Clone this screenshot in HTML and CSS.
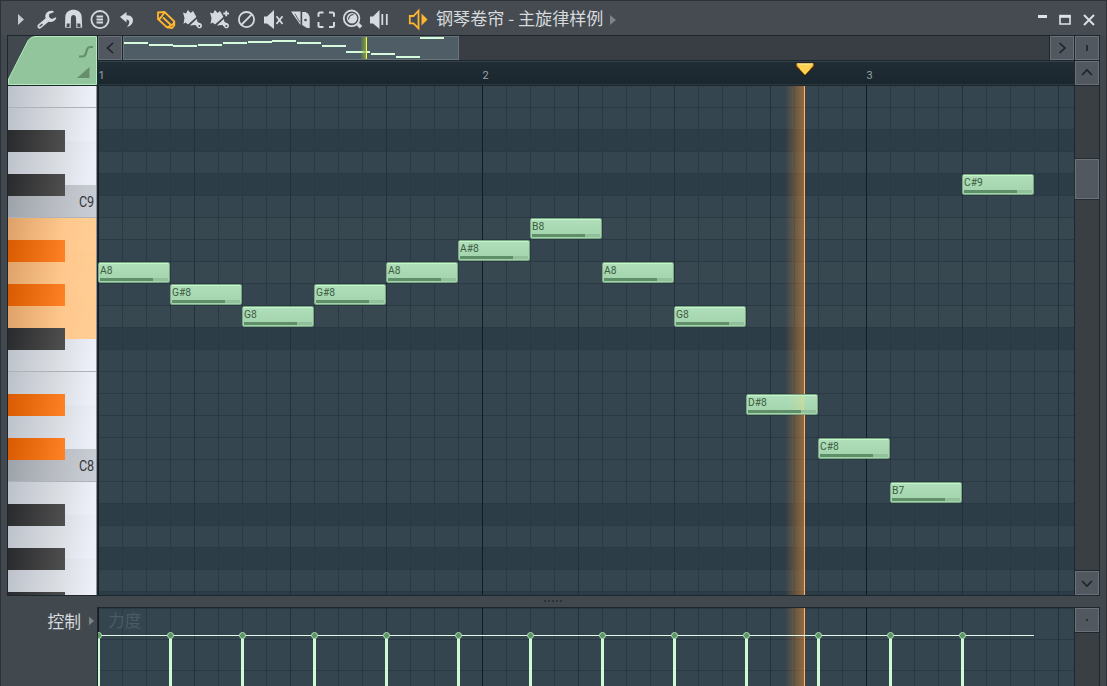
FILE: index.html
```
<!DOCTYPE html>
<html lang="zh-CN">
<head>
    <meta charset="UTF-8">
    <meta name="viewport" content="width=device-width, initial-scale=1.0">
    <title>钢琴卷帘</title>
    <link rel="stylesheet" href="styles.css">
</head>
<body>

<header class="titlebar">
    <svg class="arrow" width="6" height="11" viewBox="0 0 6 11"><path d="M0 0L6 5.5L0 11Z"/></svg>

    <div class="tools">
        <!-- wrench -->
        <svg viewBox="34 6 27 27"><path d="M39.6 26.3L48 19.2" stroke="#d4dae0" stroke-width="4.4" stroke-linecap="round"/><path d="M53.5 11.2C49 9.500 44.600 13 45.400 17.500C46.200 22.800 53.500 23.800 56.300 18.300L56 17.300L51.800 19L49 17.200L49.200 14L53.800 12.300Z"/><path d="M39.500 26.500L42.500 24" stroke="#454b51" stroke-width="1.400"/></svg>
        <!-- magnet -->
        <svg viewBox="61 6 27 27"><path d="M65 27.500L65.300 17C65.600 7.300 81.400 7.300 81.700 17L82.200 27.500L76.400 28L76 18C76 14 71 14 71 18L70.700 28Z"/><path d="M66.800 23.500L66.500 27L69.500 27.300L69.800 23.500ZM77.200 23.500L77.500 27.300L80.600 27L80.300 23.500Z" fill="#454b51"/></svg>
        <svg viewBox="88 6 27 27"><circle cx="100" cy="19.6" r="8.6" class="line"/><path d="M96.5 16.5H103M96.5 19.5H103M96.5 22.5H103" class="line"/></svg>
        <!-- undo -->
        <svg viewBox="115 6 27 27"><path d="M120 17L126.500 12V15.2C131.5 15 134 18.5 132.6 22.5C131.8 24.8 130 26 126.800 27C130.2 23.6 130 19.5 126.500 19.4V22.4Z"/></svg>
    </div>

    <div class="tools tools-edit">
        <!-- pencil -->
        <svg viewBox="153 6 27 27" class="active"><path d="M158 12.5L164.5 12L174.3 21.5V25.5L172 28L167 27.5L158 19Z M158 19C160 19.5 161.5 17 164.5 12.5M163 17.5L171 25M166.5 27.3C170 26.5 173.5 24.5 174.2 21.8" class="line"/></svg>
        <!-- brush -->
        <svg viewBox="180 6 27 27"><path d="M183 12.500L186 13.500L188 10L190.500 13L193 11L194.500 13.500L196.500 17.200L188.200 24.600L185.4 22.5L183.5 24L184.500 18Z"/><path d="M188.700 25L197 17.600" stroke="#454b51" stroke-width="1.400"/><path d="M189.800 25.400L196.800 19L197.5 22L201 23.4C203.4 26 201 29.4 198 28L195.5 25Z"/><circle cx="199.3" cy="26" r="1" fill="#454b51"/></svg>
        <!-- brush with plus -->
        <svg viewBox="207 6 27 27"><path d="M210 12.500L213 13.500L215 10L217.500 13L220 11L221.500 13.500L223.500 17.200L215.200 24.600L212.4 22.5L210.5 24L211.500 18Z"/><path d="M215.700 25L224 17.600" stroke="#454b51" stroke-width="1.400"/><path d="M216.800 25.400L223.800 19L224.5 22L228 23.4C230.4 26 228 29.4 225 28L222.5 25Z"/><circle cx="226.3" cy="26" r="1" fill="#454b51"/><path d="M223.3 13.5H229M226.2 10.8V16.3" class="line"/></svg>
        <!-- delete -->
        <svg viewBox="234 6 27 27"><circle cx="246.5" cy="19.6" r="7.6" class="line"/><path d="M241.2 25L251.8 14.3" class="line"/></svg>
        <!-- mute -->
        <svg viewBox="261 6 27 27"><path d="M264 16.5H267L274 10V29L267 23.5H264ZM275 14V25"/><path d="M276.5 16.3L282.5 24M282.5 16.3L276.5 24" class="line"/></svg>
        <!-- slice -->
        <svg viewBox="288 6 27 27"><path d="M291 11.5H300.5V25Z"/><path d="M295 13.8L299.7 22" stroke="#454b51" stroke-width=".8"/><path d="M302.2 12H305.5C308.5 13.5 309.7 15.5 309.7 18V28H307L302.2 25Z"/><circle cx="305.500" cy="20" r="1.3" fill="#454b51"/></svg>
        <!-- select -->
        <svg viewBox="315 6 27 27"><path d="M318.500 16.8V14Q318.500 12.5 320 12.5H323.5M329 12.5H332.5Q334 12.5 334 14V16.8M334 22V25.5Q334 27 332.5 27H329M323.5 27H320Q318.500 27 318.500 25.5V22" class="line wide"/></svg>
        <!-- zoom -->
        <svg viewBox="342 6 27 27"><circle cx="351.6" cy="18.3" r="7.8" class="line"/><circle cx="352" cy="18.200" r="5.200"/><path d="M348.500 19.500Q349 15 353.500 14.500" fill="none" stroke="#454b51" stroke-width="1.200"/><path d="M357.8 24L361 27.3" class="line thick"/></svg>
        <!-- preview -->
        <svg viewBox="369 6 27 27"><path d="M370 16.5H373L379.5 10V29L373 23.5H370Z"/><path d="M382.3 14V25M386.8 14V25" class="line"/></svg>
    </div>

    <svg class="speaker active" width="27" height="27" viewBox="405 6 27 27"><path d="M418.500 10.7V28.3L413.5 23.4H409.8V16H413.5Z" class="line"/><path d="M421.500 13.5L427.500 19.5L421.500 25.5Z"/></svg>
    <h1>钢琴卷帘 - 主旋律样例</h1>
    <svg class="arrow dim" width="6" height="10" viewBox="0 0 6 10"><path d="M0 0L6 5L0 10Z"/></svg>

    <div class="window-buttons">
        <svg width="10" height="14" viewBox="0 0 10 14"><path d="M1 3.500H10" stroke-width="3"/></svg>
        <svg width="12" height="14" viewBox="0 0 12 14"><path d="M1 3.5V11H11V3.5" stroke-width="1.6"/><path d="M.2 3.3H11.8" stroke-width="3"/></svg>
        <svg width="12" height="14" viewBox="0 0 12 14"><path d="M1 2L11 12M11 2L1 12" stroke-width="1.8"/></svg>
    </div>
</header>

<main class="frame">
    <div class="corner">
        <svg width="89" height="49" viewBox="0 0 89 49">
            <path class="corner-bg" d="M0 0H26Q22 0 19.500 4L0 43Z"/>
            <path class="corner-tab" d="M.5 48.500V43L20 4.500Q22.500 .5 27 .5H88.500V48.500Z"/>
            <path d="M71 20.500H74.500C77 20.500 77.500 19 78 17C79 13 79.500 11 82.500 11H85" fill="none" stroke="#668e6c" stroke-width="2.200"/>
            <path d="M69 42L81.500 31V42Z" fill="#668e6c"/>
        </svg>
    </div>

    <div class="overview">
        <button class="btn"><svg width="22" height="22" viewBox="0 0 22 22"><path d="M14 6L8.500 11L14 16"/></svg></button>
        <div class="overview-strip">
            <div class="overview-view">
                <i class="mini" style="--n:0;--row:4"></i>
                <i class="mini" style="--n:1;--row:5"></i>
                <i class="mini" style="--n:2;--row:6"></i>
                <i class="mini" style="--n:3;--row:5"></i>
                <i class="mini" style="--n:4;--row:4"></i>
                <i class="mini" style="--n:5;--row:3"></i>
                <i class="mini" style="--n:6;--row:2"></i>
                <i class="mini" style="--n:7;--row:4"></i>
                <i class="mini" style="--n:8;--row:6"></i>
                <i class="mini" style="--n:9;--row:10"></i>
                <i class="mini" style="--n:10;--row:12"></i>
                <i class="mini" style="--n:11;--row:14"></i>
                <i class="mini" style="--n:12;--row:0"></i>
                <i class="mini-playhead"></i>
            </div>
        </div>
        <button class="btn"><svg width="22" height="22" viewBox="0 0 22 22"><path d="M8.500 6L14 11L8.500 16"/></svg></button>
    </div>
    <button class="btn"><svg width="22" height="22" viewBox="0 0 22 22"><path d="M11 8V14" stroke-width="2"/></svg></button>

    <div class="ruler">
        <span>1</span><span>2</span><span>3</span>
        <svg class="marker" width="20" height="15" viewBox="0 0 20 15"><path d="M1 1H19V4.500L10 14L1 4.500Z" fill="#ffcf4e" stroke="#30210e" stroke-width="1.200"/><path d="M2 2H18" stroke="#fff09a" stroke-width="1.200"/><path d="M2.300 2.500V4.200L5 7M17.700 2.500V4.200L15 7" fill="none" stroke="#e78b2d"/></svg>
    </div>
    <button class="btn"><svg width="22" height="22" viewBox="0 0 22 22"><path d="M6 13L11 8L16 13"/></svg></button>

    <div class="keys">
        <div class="key f top"></div>
        <div class="key e sharp"></div>
        <div class="key d sharp"></div>
        <div class="key c"><span>C9</span></div>
        <div class="key b sharp lit sharp-lit"></div>
        <div class="key a sharp lit sharp-lit"></div>
        <div class="key g sharp lit"></div>
        <div class="key f"></div>
        <div class="key e sharp sharp-lit"></div>
        <div class="key d sharp sharp-lit"></div>
        <div class="key c"><span>C8</span></div>
        <div class="key b sharp"></div>
        <div class="key a sharp"></div>
        <div class="key g sharp"></div>
    </div>

    <div class="roll">
        <div class="lanes">
            <i></i><i></i><i class="dark"></i><i></i><i class="dark"></i><i></i>
            <i class="light"></i><i></i><i class="light"></i><i></i><i class="light"></i><i class="dark"></i>
            <i></i><i></i><i></i><i></i><i></i><i></i>
            <i></i><i class="dark"></i><i></i><i class="dark"></i><i></i><i class="dark"></i>
        </div>
        <div class="columns"></div>
        <div class="note" style="--n:0;--row:4">A8</div>
        <div class="note" style="--n:1;--row:5">G#8</div>
        <div class="note" style="--n:2;--row:6">G8</div>
        <div class="note" style="--n:3;--row:5">G#8</div>
        <div class="note" style="--n:4;--row:4">A8</div>
        <div class="note" style="--n:5;--row:3">A#8</div>
        <div class="note" style="--n:6;--row:2">B8</div>
        <div class="note" style="--n:7;--row:4">A8</div>
        <div class="note" style="--n:8;--row:6">G8</div>
        <div class="playhead"></div>
        <div class="note playing" style="--n:9;--row:10">D#8</div>
        <div class="note" style="--n:10;--row:12">C#8</div>
        <div class="note" style="--n:11;--row:14">B7</div>
        <div class="note" style="--n:12;--row:0">C#9</div>
    </div>
    <div class="scroll">
        <div class="thumb"></div>
        <button class="btn"><svg width="22" height="22" viewBox="0 0 22 22"><path d="M6 9L11 14L16 9"/></svg></button>
    </div>
</main>

<div class="splitter"><i></i><i></i><i></i><i></i><i></i></div>

<section class="control">
    <div class="control-label">控制<svg class="arrow dim" width="5" height="10" viewBox="0 0 6 10"><path d="M0 0L6 5L0 10Z"/></svg></div>
    <div class="control-frame">
        <div class="velocity">
            <div class="columns"></div>
            <span class="velocity-name">力度</span>
            <div class="playhead"></div>
            <div class="velocity-line"></div>
            <i class="stick" style="--n:0"></i>
            <i class="stick" style="--n:1"></i>
            <i class="stick" style="--n:2"></i>
            <i class="stick" style="--n:3"></i>
            <i class="stick" style="--n:4"></i>
            <i class="stick" style="--n:5"></i>
            <i class="stick" style="--n:6"></i>
            <i class="stick" style="--n:7"></i>
            <i class="stick" style="--n:8"></i>
            <i class="stick" style="--n:9"></i>
            <i class="stick" style="--n:10"></i>
            <i class="stick" style="--n:11"></i>
            <i class="stick" style="--n:12"></i>
        </div>
        <div class="scroll">
            <button class="btn"><svg width="22" height="22" viewBox="0 0 22 22"><path d="M10 11H12" stroke-width="2"/></svg></button>
        </div>
    </div>
</section>

</body>
</html>
```
FILE: styles.css
```
*, *::before, *::after {
    box-sizing: border-box;
}

body {
    margin: 0;
    width: 1107px;
    height: 686px;
    overflow: hidden;
    display: flex;
    flex-direction: column;
    background-color: #42494e;
    border: 1px solid #2c3237;
    border-bottom: none;
    font-family: Roboto, "Noto Sans CJK SC", sans-serif;
}

svg {
    display: block;
    flex: none;
}

/* --- Title bar --- */
.titlebar {
    height: 34px;
    flex: none;
    display: flex;
    align-items: center;
    padding: 3px 11px 0 17px;
    background-color: #454b51;
}

.arrow {
    fill: #c3c9cc;
}

.arrow.dim {
    fill: #7d8487;
}

.tools {
    display: flex;
    margin-left: 10px;
}

.tools svg {
    width: 27px;
    height: 27px;
}

.tools svg, .speaker {
    fill: #d4dae0;
}

.line {
    fill: none;
    stroke: #d4dae0;
    stroke-width: 1.8;
}

.line.wide {
    stroke-width: 2;
}

.line.thick {
    stroke-width: 3.5;
}

.tools .active, .active {
    fill: #ffb52e;
}

.active .line {
    stroke: #ffb52e;
}

.tools-edit {
    margin-left: 11px;
}

.speaker {
    margin-left: 9px;
}

h1 {
    margin: -3px 0 0 4px;
    width: 168px;
    font-family: "Noto Sans CJK SC", sans-serif;
    font-size: 17.1px;
    font-weight: 400;
    line-height: 24px;
    white-space: nowrap;
    color: #d6dadd;
}

h1 + .arrow {
    margin-left: 6px;
}

.window-buttons {
    margin-left: auto;
    display: flex;
    gap: 12px;
}

.window-buttons path {
    fill: none;
    stroke: #dde3e8;
}

/* --- Main frame, the 1px gaps show the dark background --- */
.frame {
    width: 1093px;
    height: 561px;
    flex: none;
    margin-left: 6px;
    padding: 1px;
    display: grid;
    grid-template-columns: 89px 976px 24px;
    grid-template-rows: 24px 24px 509px;
    gap: 1px;
    background-color: #1e272d;
}

.corner {
    grid-row: span 2;
}

.corner-bg {
    fill: #42494e;
}

.corner-tab {
    fill: #92c59b;
    stroke: #b4ebbd;
}

.btn {
    width: 24px;
    height: 24px;
    flex: none;
    padding: 0;
    border: 1px solid #697077;
    border-radius: 0;
    background-color: #515860;
}

.btn path {
    fill: none;
    stroke: #1c2329;
    stroke-width: 1.6;
}

.overview {
    display: flex;
    gap: 1px;
}

.overview-strip {
    flex: 1;
    background-color: #393e45;
}

.overview-view {
    position: relative;
    width: 336px;
    height: 24px;
    border: 1px solid #67757b;
    background-color: #4f5e66;
    overflow: hidden;
}

.mini {
    position: absolute;
    left: calc(var(--n) * 24.7px);
    top: calc(var(--row) * 1.37px);
    width: 24px;
    height: 2px;
    background-color: #d5fbdc;
}

.mini-playhead {
    position: absolute;
    left: 237px;
    top: 0;
    width: 6px;
    height: 22px;
    background: linear-gradient(90deg, rgba(140, 190, 40, .1), rgba(140, 180, 40, .8));
    border-right: 1px solid #f4f75c;
}

.ruler {
    position: relative;
    display: flex;
    border-top: 1px solid #34434b;
    border-bottom: 1px solid #2a373e;
    background: linear-gradient(#202d35, #1b272e);
}

.ruler span {
    width: 384px;
    flex: none;
    padding: 7px 0 0 .5px;
    font-size: 11px;
    line-height: 13px;
    color: #94a3a9;
}

.ruler span:nth-child(3) {
    width: 200px;
}

.marker {
    position: absolute;
    left: 696.5px;
    top: 0;
}

/* --- Keyboard --- */
.keys {
    overflow: hidden;
    border-right: 1px solid #8a9498;
}

.key {
    position: relative;
    height: 44px;
    background: linear-gradient(100deg, #bcc0c9, #d9dde2 55%, #edf0f9 95%);
}

.key.c, .key.f, .key.b, .key.e {
    height: 33px;
}

.key.top {
    height: 22px;
}

.key.f, .key.c {
    border-bottom: 1px solid #aeb3ba;
}

.key.c {
    background: linear-gradient(100deg, #9ca0a8, #b9bdc3 55%, #caced6);
}

.key.lit {
    background: linear-gradient(100deg, #dda168, #ffc78c 60%, #ffcf96);
}

.key.sharp::after {
    content: "";
    position: absolute;
    z-index: 1;
    left: 0;
    bottom: -11px;
    width: 57px;
    height: 22px;
    background: linear-gradient(100deg, #292a2b, #505051);
}

.key.sharp-lit::after {
    background: linear-gradient(100deg, #d95a00, #ff8226);
}

.key span {
    position: absolute;
    right: 2px;
    top: 8px;
    font-size: 15px;
    line-height: 18px;
    color: #33373c;
    transform: scaleX(.84);
    transform-origin: right;
}

/* --- Note grid --- */
.roll {
    position: relative;
    overflow: hidden;
    background-color: #34454f;
}

.lanes i {
    display: block;
    height: 22px;
    border-bottom: 1px solid #2a3943;
}

.lanes .dark {
    background-color: #2d3d47;
}

.lanes .light {
    background-color: #374851;
}

/* bars, beats and steps */
.columns {
    position: absolute;
    inset: 0;
    background:
        repeating-linear-gradient(90deg, #121c23 0 1px, transparent 1px 384px),
        repeating-linear-gradient(90deg, #23313a 0 1px, transparent 1px 96px),
        repeating-linear-gradient(90deg, #2a3943 0 1px, transparent 1px 24px);
}

.note {
    position: absolute;
    left: calc(var(--n) * 72px);
    top: calc(88px + var(--row) * 22px);
    width: 72px;
    height: 21px;
    padding: 2px 0 0 1px;
    border: 1px solid #78a582;
    border-radius: 2px;
    background: linear-gradient(#b0dfba, #a1d3ac);
    box-shadow: inset 0 1px #c3f6c9;
    font-size: 10.3px;
    line-height: 12px;
    color: #3c5c42;
}

.note::after {
    content: "";
    position: absolute;
    left: 1px;
    bottom: 1px;
    width: 68px;
    height: 3px;
    background: linear-gradient(90deg, #5f8f69 0 53px, #91c09b 53px);
}

.note.playing {
    background: linear-gradient(90deg, transparent 42px, rgba(225, 220, 140, .45) 57px, transparent 58px), linear-gradient(#b0dfba, #a1d3ac);
}

.playhead {
    position: absolute;
    left: 687px;
    top: 0;
    width: 20px;
    height: 100%;
    background: linear-gradient(90deg, rgba(200, 125, 55, 0), rgba(200, 125, 55, .65));
    border-right: 1px solid #ffb668;
}

/* --- Scrollbars --- */
.scroll {
    display: flex;
    flex-direction: column;
    width: 24px;
    background: repeating-conic-gradient(#3d4247 0 25%, #373c41 0 50%) 0 0 / 2px 2px;
}

.thumb {
    height: 40px;
    margin: 73px 0 auto;
    background-color: #515860;
    border: 1px solid #697077;
    outline: 1px solid #262d32;
}

.scroll .btn {
    outline: 1px solid #1e272d;
}

.splitter {
    height: 11px;
    flex: none;
    display: flex;
    justify-content: center;
    align-items: center;
    gap: 2px;
    padding: 0 1px 1px 0;
}

.splitter i {
    width: 2px;
    height: 2px;
    background-color: #2c3237;
}

/* --- Control lane --- */
.control {
    display: flex;
    height: 79px;
    flex: none;
}

.control-label {
    width: 96px;
    height: 28px;
    padding-right: 3px;
    display: flex;
    align-items: center;
    justify-content: flex-end;
    gap: 8px;
    font-family: "Noto Sans CJK SC", sans-serif;
    font-size: 16.8px;
    color: #d6dadd;
}

.control-frame {
    display: flex;
    gap: 1px;
    padding: 1px 1px 0;
    background-color: #1e272d;
}

.velocity {
    position: relative;
    width: 976px;
    overflow: hidden;
    background: #34454f linear-gradient(transparent 30px, #2a3943 30px) 0 1px / 100% 31px;
}

.velocity-name {
    position: absolute;
    left: 10px;
    top: 0;
    font-family: "Noto Sans CJK SC", sans-serif;
    font-size: 16.8px;
    line-height: 24px;
    color: #4b5b63;
}

.velocity-line {
    position: absolute;
    left: 0;
    top: 27px;
    width: 936px;
    height: 1px;
    background-color: #e2f8e6;
}

.stick {
    position: absolute;
    left: calc(var(--n) * 72px - 1px);
    top: 27px;
    bottom: 0;
    width: 3px;
    background-color: #ccfbd4;
}

.stick::before {
    content: "";
    position: absolute;
    left: -2px;
    top: -3px;
    width: 7px;
    height: 7px;
    border: 1px solid #a9dcb2;
    border-radius: 50%;
    background-color: #5c9466;
}
```
